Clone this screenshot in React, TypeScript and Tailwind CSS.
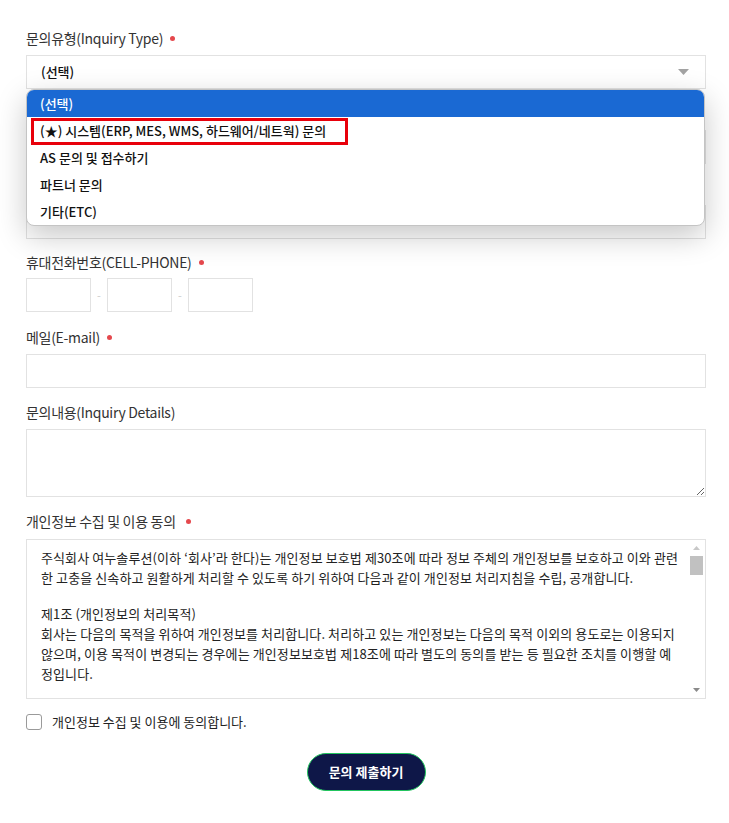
import React from "react";

const font = { fontFamily: '"Noto Sans CJK KR", "Noto Sans", sans-serif' };

function Dot({ ml = "ml-[7px]" }: { ml?: string }) {
  return <span className={`${ml} inline-block w-[5px] h-[5px] rounded-full bg-[#e5484d]`} />;
}

function Label({ children, req }: { children: React.ReactNode; req?: boolean }) {
  return (
    <div className="h-[20px] text-[14px] leading-[20px] text-[#333] tracking-[-0.3px] flex items-center">
      <span>{children}</span>
      {req && <Dot />}
    </div>
  );
}

export default function App() {
  return (
    <div className="bg-white w-[729px] h-[823px] overflow-hidden" style={font}>
      <div className="pl-[26px] pt-[28px] w-[706px] relative">
        {/* Inquiry type */}
        <Label req>문의유형(Inquiry Type)</Label>
        <div className="relative mt-[7px]">
          <div className="h-[34px] border border-[#e2e2e2] flex items-center justify-between pl-[14px] pr-[16px] text-[13px] font-medium text-[#111]">
            <span>(선택)</span>
            <svg width="11" height="6" viewBox="0 0 11 6"><path d="M0 0h11L5.5 6z" fill="#a3a3a3" /></svg>
          </div>
          {/* open dropdown */}
          <div className="absolute left-0 top-[34px] w-[679px] z-10 bg-white rounded-[8px] border border-[#c4c4c4] shadow-[0_10px_30px_rgba(0,0,0,0.22)] overflow-hidden text-[13px] font-medium text-[#111]">
            <div className="h-[27px] bg-[#1a69d3] text-white flex items-center pl-[13px]">(선택)</div>
            <div className="h-[27px] flex items-center pl-[13px] relative">
              (★) 시스템(ERP, MES, WMS, 하드웨어/네트웍) 문의
              <div className="absolute left-[4px] top-[1px] w-[317px] h-[27px] border-[3px] border-[#e8000b]" />
            </div>
            <div className="h-[27px] flex items-center pl-[13px]">AS 문의 및 접수하기</div>
            <div className="h-[27px] flex items-center pl-[13px]">파트너 문의</div>
            <div className="h-[27px] flex items-center pl-[13px]">기타(ETC)</div>
          </div>
        </div>

        {/* fields behind dropdown */}
        <div className="mt-[14px]">
          <Label req>회사명(Company)</Label>
          <div className="mt-[7px] h-[34px] border border-[#e2e2e2]" />
        </div>
        <div className="mt-[14px]">
          <Label req>담당자명(Name)</Label>
          <div className="mt-[7px] h-[34px] border border-[#e2e2e2]" />
        </div>

        {/* phone */}
        <div className="mt-[13px]">
          <Label req>휴대전화번호(CELL-PHONE)</Label>
          <div className="mt-[6px] flex items-center">
            <div className="w-[65px] h-[34px] border border-[#e2e2e2]" />
            <span className="w-[16px] text-center text-[#ccc] text-[11px]">-</span>
            <div className="w-[65px] h-[34px] border border-[#e2e2e2]" />
            <span className="w-[16px] text-center text-[#ccc] text-[11px]">-</span>
            <div className="w-[65px] h-[34px] border border-[#e2e2e2]" />
          </div>
        </div>

        {/* email */}
        <div className="mt-[15px]">
          <Label req>메일(E-mail)</Label>
          <div className="mt-[7px] h-[34px] border border-[#e2e2e2]" />
        </div>

        {/* details */}
        <div className="mt-[14px]">
          <Label>문의내용(Inquiry Details)</Label>
          <textarea className="mt-[7px] block w-full h-[68px] border border-[#e2e2e2] outline-none" />
        </div>

        {/* privacy */}
        <div className="mt-[14px]">
          <div className="h-[20px] text-[14px] leading-[20px] text-[#333] tracking-[-0.3px] flex items-center">
            <span>개인정보 수집 및 이용 동의</span>
            <Dot ml="ml-[10px]" />
          </div>
          <div className="mt-[8px] h-[160px] border border-[#e2e2e2] flex overflow-hidden">
            <div className="flex-1 overflow-hidden pl-[14px] pt-[8px] text-[13px] leading-[20px] text-[#222] tracking-[0.1px] whitespace-nowrap">
              <div>주식회사 여누솔루션(이하 ‘회사’라 한다)는 개인정보 보호법 제30조에 따라 정보 주체의 개인정보를 보호하고 이와 관련</div>
              <div>한 고충을 신속하고 원활하게 처리할 수 있도록 하기 위하여 다음과 같이 개인정보 처리지침을 수립, 공개합니다.</div>
              <div className="h-[16px]" />
              <div>제1조 (개인정보의 처리목적)</div>
              <div>회사는 다음의 목적을 위하여 개인정보를 처리합니다. 처리하고 있는 개인정보는 다음의 목적 이외의 용도로는 이용되지</div>
              <div>않으며, 이용 목적이 변경되는 경우에는 개인정보보호법 제18조에 따라 별도의 동의를 받는 등 필요한 조치를 이행할 예</div>
              <div>정입니다.</div>
              <div className="h-[16px]" />
              <div>1. 홈페이지 회원 가입 및 관리</div>
            </div>
            {/* scrollbar */}
            <div className="w-[17px] flex flex-col items-center pt-[6px] pb-[6px] bg-white">
              <svg width="7" height="4" viewBox="0 0 7 4"><path d="M0 4h7L3.5 0z" fill="#c8c8c8" /></svg>
              <div className="mt-[6px] w-[13px] h-[19px] bg-[#c1c1c1]" />
              <div className="flex-1" />
              <svg width="7" height="4" viewBox="0 0 7 4"><path d="M0 0h7L3.5 4z" fill="#8a8a8a" /></svg>
            </div>
          </div>
        </div>

        {/* agree */}
        <div className="mt-[13px] h-[20px] flex items-center">
          <div className="w-[16px] h-[16px] border border-[#9a9a9a] rounded-[3px] bg-white" />
          <span className="ml-[10px] text-[13px] text-[#222]">개인정보 수집 및 이용에 동의합니다.</span>
        </div>

        {/* submit */}
        <div className="mt-[21px] flex justify-center">
          <button className="w-[119px] h-[38px] rounded-full bg-[#0e1748] border-[1.5px] border-[#22c55e] text-white text-[13px] font-bold">
            문의 제출하기
          </button>
        </div>
      </div>
    </div>
  );
}
